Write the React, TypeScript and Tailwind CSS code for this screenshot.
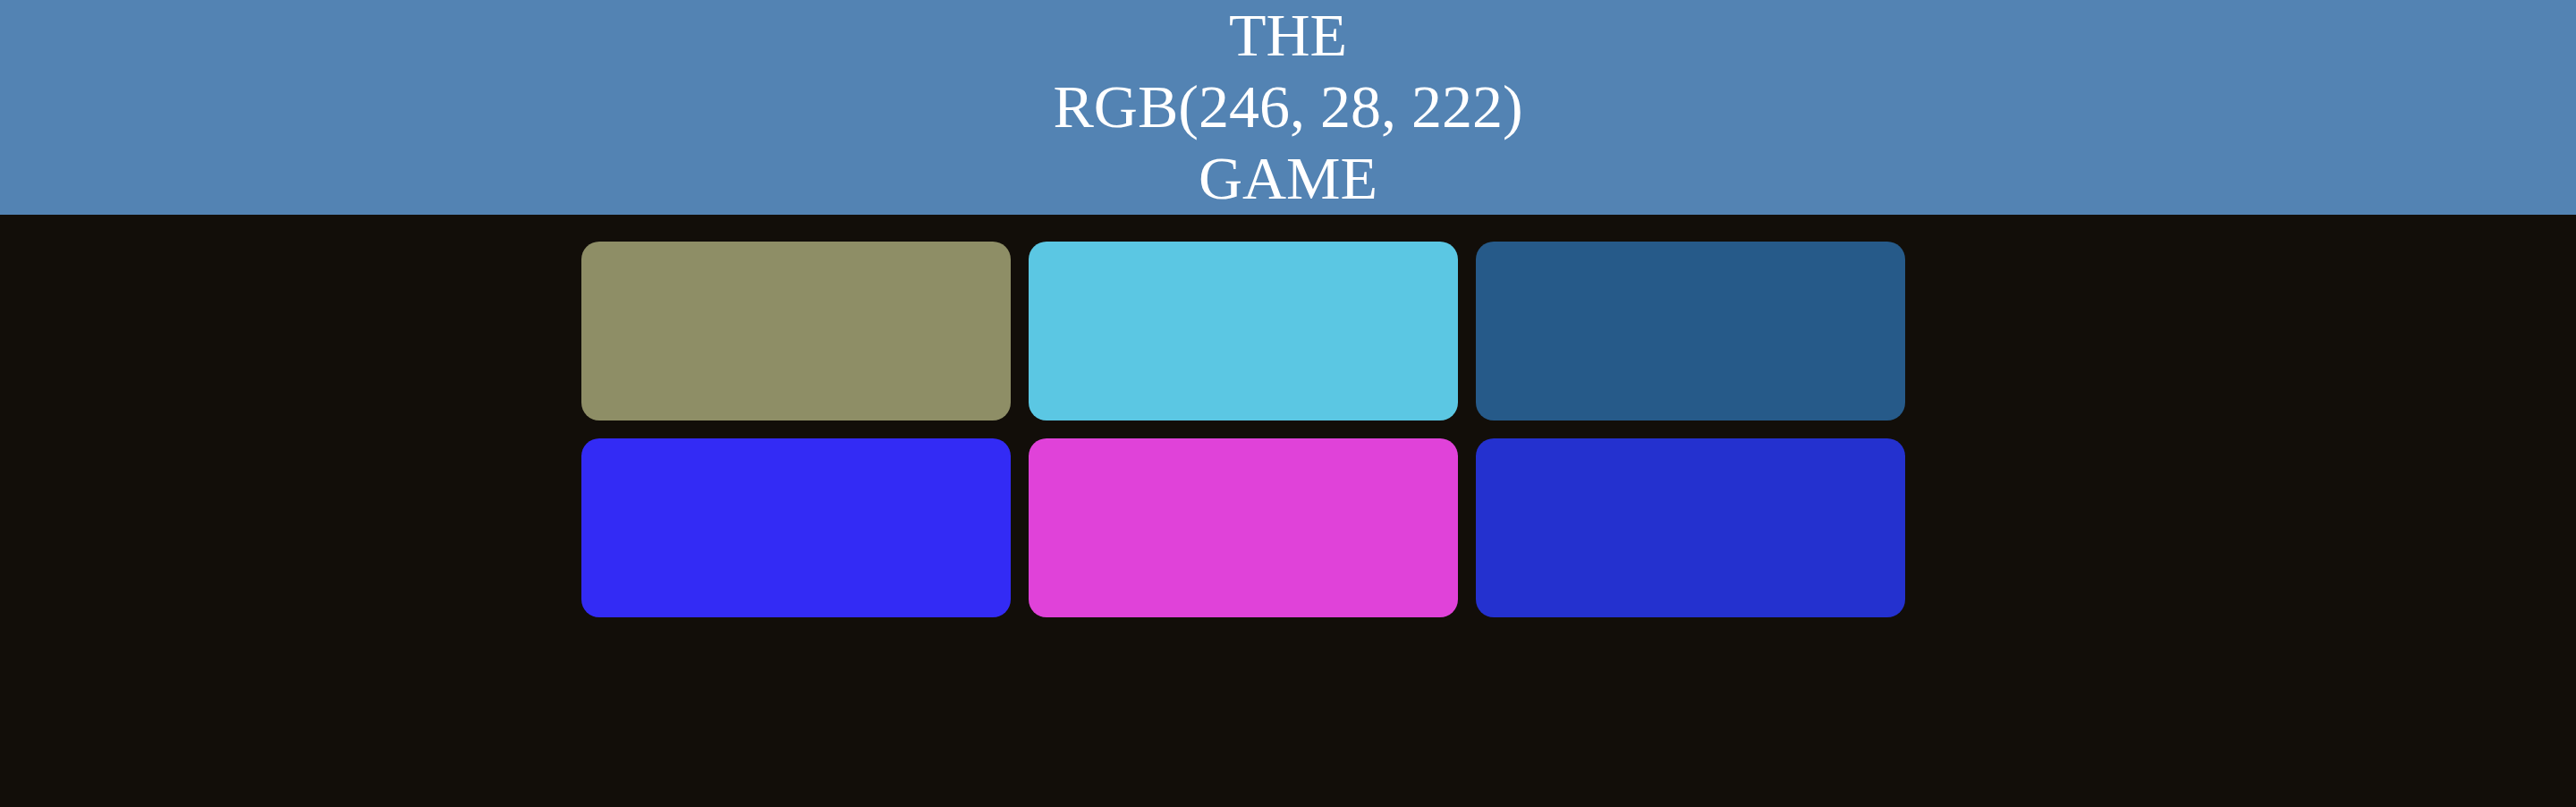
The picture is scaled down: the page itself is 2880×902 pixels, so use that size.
const squares = ['#8e8e66', '#5bc7e3', '#265a89', '#332bf5', '#e042d9', '#2431cf'];

export default function App() {
  return (
    <div className="min-h-[902px] bg-[#120e09]">
      <header className="h-[240px] bg-[#5383b3] text-center text-white">
        <h1 className="font-['Liberation_Serif','Times_New_Roman',serif] text-[68px] font-normal leading-[80px] -translate-y-px">
          THE
          <br />
          RGB(246, 28, 222)
          <br />
          GAME
        </h1>
      </header>
      <div className="mx-auto flex w-[1580px] flex-wrap gap-5 pt-[30px]">
        {squares.map((color) => (
          <div
            key={color}
            className="h-[200px] w-[480px] rounded-[20px]"
            style={{ backgroundColor: color }}
          />
        ))}
      </div>
    </div>
  );
}
